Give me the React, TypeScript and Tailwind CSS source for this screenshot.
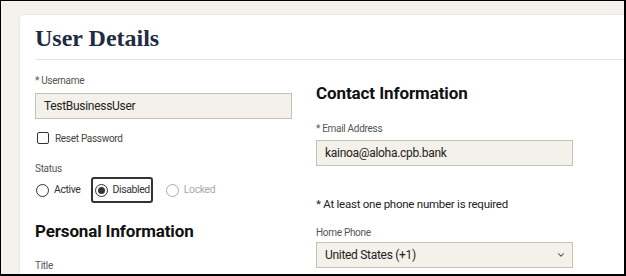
import { ChevronDown } from "lucide-react";

const sans = "font-['Roboto','Liberation_Sans',sans-serif]";

function Label({ children, className = "" }: { children: React.ReactNode; className?: string }) {
  return <div className={`text-[10px] leading-[14px] tracking-[-0.3px] text-[#555] ${className}`}>{children}</div>;
}

function Radio({ label, checked, disabled }: { label: string; checked?: boolean; disabled?: boolean }) {
  return (
    <div className="flex items-center gap-[5px]">
      <span
        className={`flex h-[13px] w-[13px] items-center justify-center rounded-full border-[1.5px] ${
          disabled ? "border-[#aaa]" : "border-[#333]"
        }`}
      >
        {checked && <span className="h-[7px] w-[7px] rounded-full bg-[#333]" />}
      </span>
      <span className={`text-[10.5px] tracking-[-0.4px] ${disabled ? "text-[#aaa]" : "text-[#333]"}`}>{label}</span>
    </div>
  );
}

export default function App() {
  return (
    <div className={`h-[276px] w-[626px] overflow-hidden border-t border-l border-b-2 border-r-2 border-black bg-[#f5f2ee] ${sans}`}>
      <div className="ml-[19px] mt-[14px] h-[300px] rounded-tl-[4px] bg-white pl-[15px] shadow-[0_0_2px_rgba(0,0,0,0.12)]">
        <div className="pt-[9px]">
          <h1 className="font-['Liberation_Serif',serif] text-[24px] font-bold leading-[28px] text-[#1e2d44]">User Details</h1>
        </div>
        <div className="mt-[7px] h-px bg-[#e6e3df]" />

        <div className="grid grid-cols-[257px_257px] gap-x-[24px]">
          {/* left column */}
          <div>
            <Label className="mt-[14px]">* Username</Label>
            <div className="mt-[5px] flex h-[26px] items-center border border-[#c4c0ba] bg-[#f4f0ea] px-[8px] text-[12px] tracking-[-0.3px] text-[#222]">
              TestBusinessUser
            </div>
            <div className="mt-[11px] flex h-[16px] items-center gap-[6px] pl-[2px]">
              <span className="h-[12px] w-[12px] rounded-[2px] border-[1.5px] border-[#333]" />
              <span className="text-[10px] tracking-[-0.3px] text-[#444]">Reset Password</span>
            </div>
            <Label className="mt-[16px]">Status</Label>
            <div className="mt-[1px] flex h-[26px] items-center">
              <div className="pl-[1px]">
                <Radio label="Active" />
              </div>
              <div className="ml-[10px] flex h-[26px] items-center rounded-[3px] border-2 border-[#333] pl-[2px] pr-[1px]">
                <Radio label="Disabled" checked />
              </div>
              <div className="ml-[13px]">
                <Radio label="Locked" disabled />
              </div>
            </div>
            <h2 className="mt-[17px] text-[17px] font-bold leading-[22px] tracking-[-0.15px] text-[#111]">Personal Information</h2>
            <Label className="mt-[17px]">Title</Label>
          </div>

          {/* right column */}
          <div>
            <h2 className="mt-[22px] text-[17px] font-bold leading-[22px] tracking-[-0.1px] text-[#111]">Contact Information</h2>
            <Label className="mt-[18px]">* Email Address</Label>
            <div className="mt-[4px] flex h-[26px] items-center border border-[#c4c0ba] bg-[#f4f0ea] px-[8px] text-[12px] tracking-[-0.3px] text-[#222]">
              kainoa@aloha.cpb.bank
            </div>
            <div className="mt-[30px] text-[11.5px] leading-[16px] tracking-[-0.25px] text-[#222]">* At least one phone number is required</div>
            <Label className="mt-[14px]">Home Phone</Label>
            <div className="mt-[2px] flex h-[26px] items-center justify-between border border-[#c4c0ba] bg-[#f4f0ea] pl-[8px] pr-[6px] text-[12px] tracking-[-0.3px] text-[#222]">
              <span>United States (+1)</span>
              <ChevronDown className="h-[10px] w-[10px] text-[#444]" strokeWidth={2.5} />
            </div>
          </div>
        </div>
      </div>
    </div>
  );
}
